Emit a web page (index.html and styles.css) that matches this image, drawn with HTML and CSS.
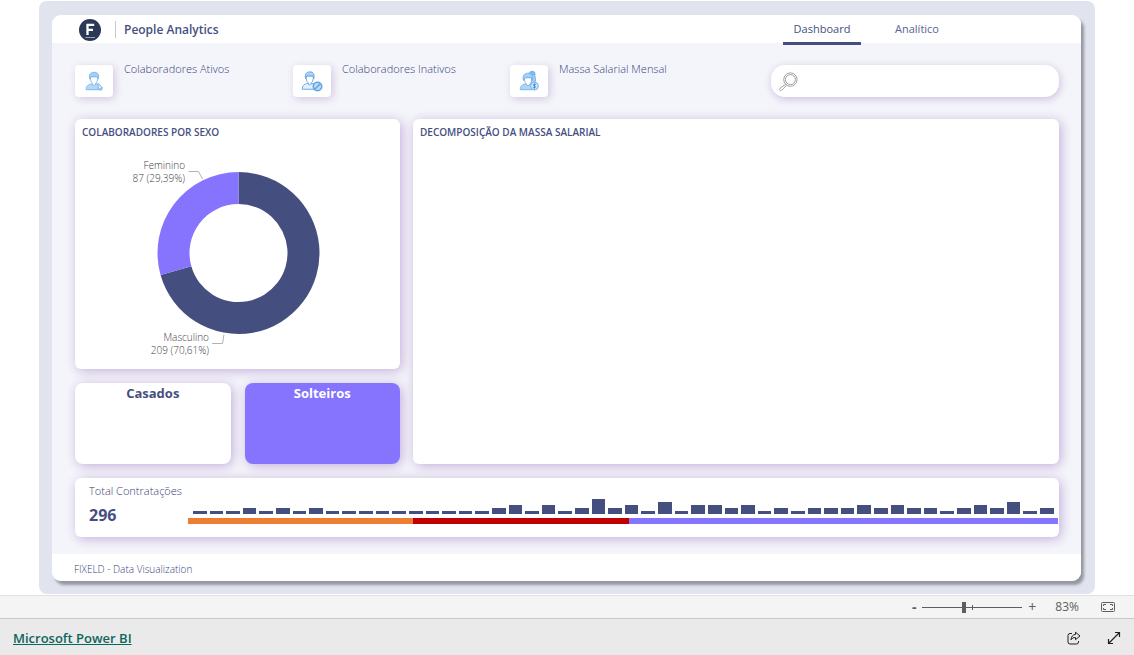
FILE: index.html
```html
<!DOCTYPE html>
<html lang="pt-BR">
<head>
<meta charset="utf-8">
<meta name="viewport" content="width=device-width, initial-scale=1">
<title>People Analytics</title>
<link rel="stylesheet" href="styles.css">
</head>
<body>
<main class="frame">
  <div class="report">
    <header class="top">
      <svg class="logo" viewBox="0 0 22 22" aria-hidden="true">
        <circle cx="11" cy="11" r="11" fill="#2b3856"/>
        <path d="M8.500 16V5.800H15.200M8.500 10.800H14" fill="none" stroke="#fff" stroke-width="2.300"/>
        <path d="M6.500 18.500H16" stroke="#9aa3b8" stroke-width="1"/>
      </svg>
      <h1 class="title">People Analytics</h1>
      <nav class="tabs">
        <a class="tab tab-active" href="#dashboard">Dashboard</a>
        <a class="tab" href="#analitico">Analítico</a>
      </nav>
    </header>

    <div class="content">
      <section class="kpis">
        <div class="kpi">
          <span class="kpi-icon">
            <svg viewBox="0 0 24 24" aria-hidden="true" fill="none" stroke="#7ab6ec" stroke-width="1">
              <path d="M3.500 21.500c0-4 1.500-5.300 6.500-6.500l2 1.500 2-1.500c4.500 1 6 2.500 6.500 6.500z" fill="#b3d8f8"/>
              <path d="M8 7c0 5 1.500 7 2.500 7.600V16l1.500 1 1.500-1v-1.400C15 14 16 12 16 7z" fill="#fff"/>
              <path d="M7.500 10C6 5 8 3 12 2.500c4 0 6 2.500 4.500 7.500L15.500 7.500h-7z" fill="#a2d0f7"/>
              <path d="M16.500 14.500l5 5.200-2.200.1.900 2-1.200.4-.9-1.900-1.600 1.200z" fill="#d9edfd"/>
            </svg>
          </span>
          <span class="kpi-label">Colaboradores Ativos</span>
        </div>
        <div class="kpi">
          <span class="kpi-icon">
            <svg viewBox="0 0 24 24" aria-hidden="true" fill="none" stroke="#64a3df" stroke-width="1">
              <path d="M1.500 21c0-4 1.500-5.300 6-6.500l2 1.500 2-1.500c4.500 1 6 2.500 6.500 6.500z" fill="#e2f1fd"/>
              <path d="M5.500 6.500c0 5 1.500 7 2.500 7.600v1.400l1.500 1 1.500-1v-1.400c1.500-.6 2.500-2.600 2.500-7.600z" fill="#fff"/>
              <path d="M5 9.500C4 4.500 5.500 2.500 9.500 2c4 0 5.500 2.500 4.500 7.500L13 6.500H6z" fill="#a9d3f7"/>
              <circle cx="18" cy="18" r="4.600" fill="#b9dcf8" stroke-width="1.700"/>
              <path d="M15 21l6-6" stroke-width="1.700"/>
            </svg>
          </span>
          <span class="kpi-label">Colaboradores Inativos</span>
        </div>
        <div class="kpi">
          <span class="kpi-icon">
            <svg viewBox="0 0 24 24" aria-hidden="true" fill="none" stroke="#75b0e6" stroke-width="1">
              <circle cx="15.500" cy="4.500" r="3.200" fill="#7cbaf0"/>
              <path d="M14 5c5-1 6 4 4.500 10H14z" fill="#a4d0f7"/>
              <path d="M2.500 21.500c0-4 1.500-5.300 6-6.500h4c4.500 1 6.500 2.500 6.500 6.500z" fill="#acd5f8"/>
              <path d="M7 8c0 5 1 6.500 2.300 7.200V16.500l1.700.6 1.700-.6v-1.300C14 14.500 15 13 15 8z" fill="#fff"/>
              <path d="M6 11.500C4.500 6.500 6.500 4 10.500 3.500c4.500 0 6.500 3 5 8L15 8.500H7.500z" fill="#a2d0f7"/>
              <circle cx="18" cy="17.500" r="4.300" fill="#c8e3fa"/>
              <path d="M19.500 15.900c-2.500-1-3.700.8-1.500 1.600s1 2.400-1.500 1.600M18 14.600v5.800" stroke="#4080bb" stroke-width=".9"/>
            </svg>
          </span>
          <span class="kpi-label">Massa Salarial Mensal</span>
        </div>
        <label class="search">
          <svg class="search-icon" viewBox="0 0 22 22" aria-hidden="true" fill="none" stroke="#9b9b9b" stroke-width="1">
            <circle cx="13" cy="9" r="7"/>
            <circle cx="13" cy="9" r="5.200"/>
            <path d="M7.500 13.500l2 2M6.600 14.700l1.400 1.300-4.200 4.200c-1.600 1-3-.5-2-1.800z"/>
          </svg>
          <input class="search-input" type="text" aria-label="Pesquisar colaborador">
        </label>
      </section>

      <section class="panels">
        <div class="left">
          <article class="card card-donut">
            <h2 class="card-title">COLABORADORES POR SEXO</h2>
            <svg class="donut" viewBox="0 0 325 224" role="img" aria-label="Colaboradores por sexo">
              <path d="M163.500 27a81 81 0 1 1-77.940 103.060L116.350 121.340A49 49 0 1 0 163.500 59z" fill="#454f7f"/>
              <path d="M163.500 27A81 81 0 0 0 85.560 130.060L116.350 121.340A49 49 0 0 1 163.500 59z" fill="#8674ff"/>
              <path d="M113.500 26.500h10l4 7.500M137 198.500h10.500l1.500-9" fill="none" stroke="#b3b3b3"/>
              <text class="donut-label" x="110" y="24">Feminino</text>
              <text class="donut-label" x="110" y="37">87 (29,39%)</text>
              <text class="donut-label" x="134" y="196">Masculino</text>
              <text class="donut-label" x="134" y="209">209 (70,61%)</text>
            </svg>
          </article>
          <div class="status">
            <article class="card status-card"><h2 class="status-title">Casados</h2></article>
            <article class="card status-card status-selected"><h2 class="status-title">Solteiros</h2></article>
          </div>
        </div>
        <article class="card card-tree">
          <h2 class="card-title">DECOMPOSIÇÃO DA MASSA SALARIAL</h2>
        </article>
      </section>

      <section class="card hires">
        <div class="hires-total">
          <span class="hires-label">Total Contratações</span>
          <strong class="hires-value">296</strong>
        </div>
        <div class="hires-chart">
          <div class="bars">
            <i class="b1"></i><i class="b1"></i><i class="b1"></i><i class="b2"></i><i class="b1"></i><i class="b2"></i><i class="b1"></i><i class="b2"></i><i class="b1"></i><i class="b1"></i><i class="b1"></i><i class="b1"></i><i class="b1"></i>
            <i class="b1"></i><i class="b1"></i><i class="b1"></i><i class="b1"></i><i class="b1"></i><i class="b2"></i><i class="b3"></i><i class="b1"></i><i class="b3"></i><i class="b1"></i><i class="b2"></i><i class="b5"></i><i class="b2"></i>
            <i class="b3"></i><i class="b1"></i><i class="b4"></i><i class="b1"></i><i class="b3"></i><i class="b3"></i><i class="b2"></i><i class="b3"></i><i class="b1"></i><i class="b2"></i><i class="b1"></i><i class="b2"></i><i class="b2"></i>
            <i class="b2"></i><i class="b3"></i><i class="b2"></i><i class="b3"></i><i class="b2"></i><i class="b2"></i><i class="b1"></i><i class="b2"></i><i class="b3"></i><i class="b2"></i><i class="b4"></i><i class="b1"></i><i class="b2"></i>
          </div>
          <div class="periods">
            <span class="period period-orange"></span>
            <span class="period period-red"></span>
            <span class="period period-purple"></span>
          </div>
        </div>
      </section>
    </div>

    <footer class="credit">FIXELD - Data Visualization</footer>
  </div>
</main>

<div class="zoombar">
  <button class="zoom-btn zoom-minus" type="button" aria-label="Reduzir">-</button>
  <input class="zoom-range" type="range" min="0" max="100" value="41" aria-label="Zoom">
  <button class="zoom-btn zoom-plus" type="button" aria-label="Ampliar">+</button>
  <span class="zoom-value">83%</span>
  <button class="icon-btn" type="button" aria-label="Ajustar à página">
    <svg width="14" height="10" viewBox="0 0 14 10" fill="none" stroke="#5f5e5c">
      <rect x=".5" y=".5" width="13" height="9" rx="1"/>
      <path d="M5 2.500H2.500V4M2.500 6v1.500H5M9 2.500h2.500V4M11.500 6v1.500H9"/>
    </svg>
  </button>
</div>

<div class="brandbar">
  <a class="brand" href="#powerbi">Microsoft Power BI</a>
  <button class="icon-btn" type="button" aria-label="Compartilhar">
    <svg width="14" height="14" viewBox="0 0 14 14" fill="none" stroke="#1f1f1f" stroke-linejoin="round">
      <path d="M5 2.500H3a2 2 0 0 0-2 2V11a2 2 0 0 0 2 2h6.500a2 2 0 0 0 2-2v-1"/>
      <path d="M8.500 1.200L13 5 8.500 8.700V6.500C6.500 6.500 5 7.200 4 8.800 4.200 5.500 6 3.600 8.500 3.400z"/>
    </svg>
  </button>
  <button class="icon-btn" type="button" aria-label="Tela inteira">
    <svg width="14" height="14" viewBox="0 0 14 14" fill="none" stroke="#1f1f1f" stroke-width="1.200">
      <path d="M1.500 12.500l11-11M8 1.500h4.500V6M1.500 8v4.500H6"/>
    </svg>
  </button>
</div>
</body>
</html>
```
FILE: styles.css
```css
* { box-sizing: border-box; }

body {
  margin: 0;
  min-height: 100vh;
  display: flex;
  flex-direction: column;
  background: #fff;
  color: #454f7f;
  font-family: "Segoe UI", "Open Sans", "Noto Sans", sans-serif;
}

h1, h2 { margin: 0; }

button {
  border: 0;
  padding: 0;
  background: none;
  font: inherit;
  color: inherit;
}

.frame {
  flex: 1;
  display: flex;
  margin: 1px 39px;
  padding: 14px 14px 13px 13px;
  border-radius: 8px;
  background: #e1e3ef;
}

.report {
  flex: 1;
  display: flex;
  flex-direction: column;
  border-radius: 9px;
  background: #f4f5fa;
  box-shadow: 3px 4px 3px #96969f;
}

.top {
  display: flex;
  align-items: center;
  height: 28px;
  padding: 1px 109px 0 27px;
  border-radius: 9px 9px 0 0;
  background: #fff;
}

.logo {
  width: 22px;
  height: 22px;
}

.title {
  margin-left: 14px;
  padding-left: 8px;
  border-left: 1px solid #c8c8c8;
  font-size: 12px;
  line-height: 17px;
  font-weight: 600;
}

.tabs {
  display: flex;
  gap: 1px;
  margin-left: auto;
  align-self: flex-start;
}

.tab {
  min-width: 78px;
  padding: 5px 10px 7px;
  font-size: 11px;
  line-height: 16px;
  text-align: center;
  text-decoration: none;
  color: #5a638f;
}

.tab:last-child { min-width: 110px; }

.tab-active {
  position: relative;
  border-bottom: 3px solid #454f7f;
  padding-bottom: 5px;
  color: #454f7f;
}

.content {
  flex: 1;
  display: flex;
  flex-direction: column;
  padding: 22px 22px 17px 23px;
}

.kpis {
  display: grid;
  grid-template-columns: 218fr 217fr 261fr 288fr;
  margin-bottom: 22px;
}

.kpi {
  display: flex;
  align-items: flex-start;
  gap: 11px;
}

.kpi-icon {
  display: flex;
  justify-content: center;
  align-items: center;
  width: 38px;
  height: 32px;
  border-radius: 4px;
  background: #fff;
  box-shadow: 2px 2px 9px #d3c5e3;
}

.kpi-icon svg {
  width: 22px;
  height: 22px;
}

.kpi-label {
  margin-top: -5px;
  color: #38427a;
  font-size: 11px;
  line-height: 18px;
  font-weight: 300;
}

.search {
  display: flex;
  align-items: center;
  gap: 8px;
  height: 32px;
  padding: 1px 14px 0 7px;
  border-radius: 14px;
  background: #fff;
  box-shadow: 1px 2px 8px #cdbde0;
}

.search-icon {
  width: 21px;
  height: 21px;
}

.search-input {
  flex: 1;
  min-width: 0;
  border: 0;
  outline: 0;
  background: transparent;
  font: inherit;
  font-size: 12px;
}

.panels {
  flex: 1;
  display: grid;
  grid-template-columns: 325fr 646fr;
  gap: 13px;
  margin-bottom: 14px;
}

.left {
  display: flex;
  flex-direction: column;
  gap: 14px;
}

.card {
  border-radius: 6px;
  background: #fff;
  box-shadow: 2px 2px 12px #c4aedb;
}

.card-donut {
  flex: 1;
  display: flex;
  flex-direction: column;
}

.card-title {
  padding: 4px 7px;
  font-size: 10px;
  line-height: 18px;
  font-weight: 600;
}

.donut { width: 100%; }

.donut-label {
  fill: #45433f;
  font-size: 10px;
  font-weight: 300;
  text-anchor: end;
}

.status {
  display: grid;
  grid-template-columns: 1fr 1fr;
  gap: 14px;
}

.status-card {
  min-height: 81px;
  border-radius: 8px;
  text-align: center;
}

.status-title {
  padding-top: 1px;
  font-size: 13px;
  line-height: 18px;
  font-weight: 700;
}

.status-selected {
  background: #8674ff;
  color: #fff;
}

.hires {
  display: flex;
  min-height: 59px;
}

.hires-total {
  display: flex;
  flex-direction: column;
  width: 113px;
  padding: 4px 0 0 14px;
  white-space: nowrap;
}

.hires-label {
  color: #38427a;
  font-size: 11px;
  line-height: 18px;
  font-weight: 300;
}

.hires-value {
  padding-top: 3px;
  font-size: 16px;
  line-height: 24px;
}

.hires-chart {
  flex: 1;
  padding-top: 20px;
}

.bars {
  display: flex;
  align-items: flex-end;
  gap: 3px;
  height: 16px;
  padding: 0 5px;
}

.bars i {
  flex: 1;
  background: #454f7f;
}

.bars .b1 { height: 3px; }
.bars .b2 { height: 6px; }
.bars .b3 { height: 9px; }
.bars .b4 { height: 12px; }
.bars .b5 { height: 15px; }

.periods {
  display: flex;
  height: 6px;
  margin: 4px 1px 0 0;
}

.period-orange { flex: 225; background: #ed7d31; }
.period-red { flex: 216; background: #c00000; }
.period-purple { flex: 429; background: #8674ff; }

.credit {
  padding: 7px 22px 4px;
  border-radius: 0 0 9px 9px;
  background: #fff;
  color: #38427a;
  font-size: 10px;
  line-height: 16px;
  font-weight: 300;
}

.zoombar {
  display: flex;
  align-items: center;
  justify-content: flex-end;
  height: 23px;
  padding-right: 19px;
  border-top: 1px solid #e0e0e0;
  background: #f4f4f4;
  color: #605e5c;
}

.zoom-btn {
  width: 8px;
  font-size: 14px;
  line-height: 20px;
}

.zoom-minus { font-weight: 700; }

.zoom-range {
  appearance: none;
  width: 100px;
  height: 11px;
  margin: 0 6px 0 4px;
  background:
    linear-gradient(#605e5c, #605e5c) 50px 50% / 1px 5px no-repeat,
    linear-gradient(#605e5c, #605e5c) 0 50% / 100% 1px no-repeat;
}

.zoom-range::-webkit-slider-thumb {
  appearance: none;
  width: 4px;
  height: 11px;
  background: #605e5c;
}

.zoom-value {
  margin: 0 22px 0 19px;
  font-size: 12px;
  line-height: 20px;
}

.icon-btn { display: flex; }

.brandbar {
  display: flex;
  align-items: center;
  gap: 26px;
  height: 37px;
  padding: 2px 13px 0;
  border-top: 1px solid #c8c8c8;
  background: #eaeaea;
}

.brand {
  margin-right: auto;
  color: #0b665c;
  font-size: 13px;
  line-height: 20px;
  font-weight: 600;
}
```
